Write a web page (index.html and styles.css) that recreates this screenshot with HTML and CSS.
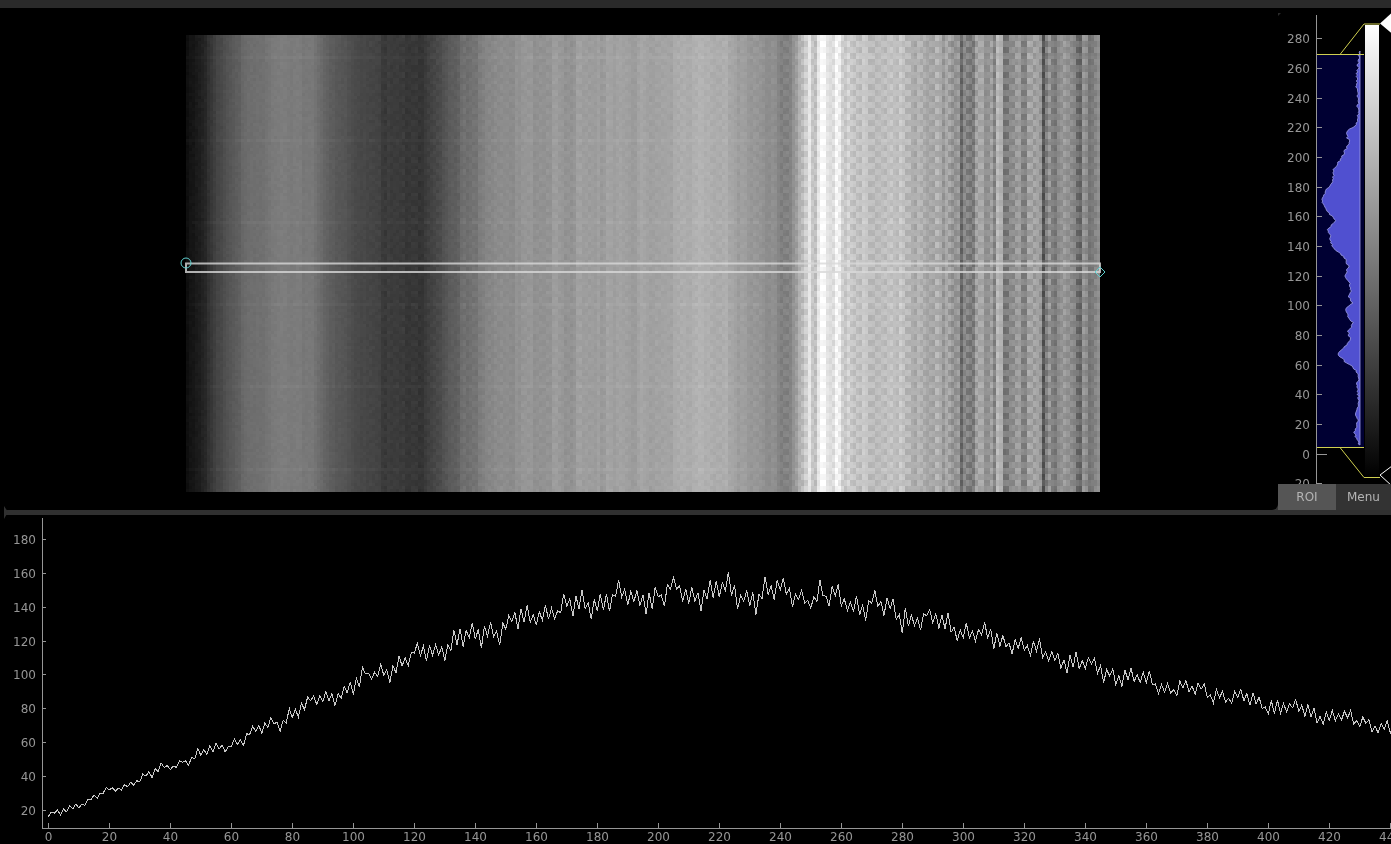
FILE: index.html
```html
<!DOCTYPE html>
<html>
<head>
    <meta charset="utf-8">
    <meta content="width=device-width, initial-scale=1" name="viewport">
    <title>ImageView</title>
    <link rel="stylesheet" href="styles.css">
</head>
<body>
<div class="topbar"></div>
<div class="upper">
    <div class="image-view">
        <canvas id="image" class="image" width="300" height="150"></canvas>
        <svg class="roi" viewBox="0 8 1278 502">
            <rect class="roi-box" x="186" y="263.5" width="914" height="8.5"></rect>
            <circle class="roi-handle" cx="186" cy="263" r="5"></circle>
            <polygon class="roi-handle" points="1100,267 1105,272 1100,277 1095,272"></polygon>
        </svg>
    </div>
    <div class="side">
        <div class="hist-view">
            <span class="handle"></span>
            <svg id="hist" class="hist" viewBox="1278 8 113 476">
                <rect class="hist-bg" x="1317" y="55" width="47" height="392"></rect>
                <polygon id="histFill" class="hist-fill"></polygon>
                <line class="axis" x1="1316.5" y1="15" x2="1316.5" y2="484"></line>
                <line class="region" x1="1317" y1="54.5" x2="1364" y2="54.5"></line>
                <line class="region" x1="1317" y1="447.5" x2="1364" y2="447.5"></line>
                <polyline class="region" points="1340,54.5 1364,24 1380,24"></polyline>
                <polyline class="region" points="1340,447.5 1364,477.5 1380,477.5"></polyline>
                <defs>
                    <linearGradient id="levels" x1="0" y1="0" x2="0" y2="1">
                        <stop offset="0" stop-color="#ffffff"></stop>
                        <stop offset="1" stop-color="#000000"></stop>
                    </linearGradient>
                </defs>
                <rect x="1365" y="25" width="14" height="452" fill="url(#levels)"></rect>
                <polygon class="tri-top" points="1380,23.5 1392,12.5 1392,33.5"></polygon>
                <polygon class="tri-bottom" points="1380,475 1392,466 1392,486"></polygon>
            </svg>
        </div>
        <div class="buttons">
            <div class="btn btn-on">ROI</div>
            <div class="btn">Menu</div>
        </div>
    </div>
</div>
<div class="splitter"></div>
<div class="plot-view">
    <svg id="plot" class="plot" viewBox="0 515 1391 329">
        <line class="axis" x1="42.5" y1="518" x2="42.5" y2="828"></line>
        <line class="axis" x1="42" y1="828.5" x2="1391" y2="828.5"></line>
        <polyline id="curve" class="curve"></polyline>
    </svg>
</div>
<script src="script.js" type="text/javascript"></script>
</body>
</html>
```

FILE: styles.css
```css
html, body {
    margin: 0;
    height: 100%;
    background-color: #000;
    overflow: hidden;
}

body {
    display: flex;
    flex-direction: column;
    font-family: "DejaVu Sans", sans-serif;
}

.topbar {
    height: 8px;
    background-color: #2a2a2a;
}

.upper {
    display: flex;
    height: 502px;
    background-color: #333;
}

.image-view {
    flex: 1;
    position: relative;
    box-sizing: border-box;
    padding: 27px 0 0 186px;
    background-color: #000;
    border-bottom-right-radius: 6px;
}

.image {
    display: block;
    width: 914px;
    height: 457px;
    image-rendering: pixelated;
}

.roi {
    position: absolute;
    left: 0;
    top: 0;
    width: 1278px;
    height: 502px;
    overflow: visible;
}

.roi-box {
    fill: none;
    stroke: #d8d8d8;
    stroke-opacity: 0.8;
    stroke-width: 2;
}

.roi-handle {
    fill: none;
    stroke: #5fd0d0;
    stroke-width: 1;
}

.side {
    width: 113px;
    display: flex;
    flex-direction: column;
}

.hist-view {
    flex: 1;
    position: relative;
    background-color: #000;
    overflow: hidden;
}

.handle {
    position: absolute;
    left: -3px;
    top: 5px;
    border-left: 3px solid transparent;
    border-right: 3px solid transparent;
    border-top: 3px solid #2a2a2a;
}

.hist {
    display: block;
    width: 113px;
    height: 476px;
    will-change: transform;
}

.hist-bg {
    fill: #000033;
}

.hist-fill {
    fill: #5050d0;
    stroke: #a0a0e6;
    stroke-width: 0.8;
}

.axis {
    stroke: #969696;
    stroke-width: 1;
    shape-rendering: crispEdges;
}

.tick-label {
    fill: #969696;
    font-family: "DejaVu Sans", sans-serif;
    font-size: 12px;
}

.region {
    fill: none;
    stroke: #d0d050;
    stroke-width: 1;
}

.tri-top {
    fill: #fff;
}

.tri-bottom {
    fill: #000;
    stroke: #fff;
    stroke-width: 1;
}

.buttons {
    display: flex;
    height: 26px;
    background-color: #333;
}

.btn {
    width: 55px;
    line-height: 26px;
    text-align: center;
    font-size: 12px;
    color: #b4b4b4;
    will-change: transform;
}

.btn-on {
    width: 58px;
    background-color: #555;
}

.splitter {
    position: relative;
    height: 5px;
    margin-left: 4px;
    background-color: #303030;
}

.splitter::before {
    content: "";
    position: absolute;
    left: 0;
    top: -4px;
    border-left: 4px solid #303030;
    border-top: 6px solid transparent;
    border-bottom: 7px solid transparent;
}

.plot-view {
    flex: 1;
    min-height: 0;
}

.plot {
    display: block;
    width: 1391px;
    height: 329px;
    will-change: transform;
}

.curve {
    fill: none;
    stroke: #c8c8c8;
    stroke-width: 1;
    shape-rendering: crispEdges;
}
```

FILE: script.js
```js
var SVG_NS = 'http://www.w3.org/2000/svg';

// small repeatable random numbers, so every run draws the same picture
var seed = 12345;
function rnd() {
    seed = (seed * 1103515245 + 12345) % 2147483648;
    return seed / 2147483648;
}

function interp(table, x) {
    if (x <= table[0][0]) return table[0][1];
    for (var i = 1; i < table.length; i++) {
        if (x <= table[i][0]) {
            var a = table[i - 1], b = table[i];
            return a[1] + (b[1] - a[1]) * (x - a[0]) / (b[0] - a[0]);
        }
    }
    return table[table.length - 1][1];
}

function addNode(svg, name, attrs, text) {
    var node = document.createElementNS(SVG_NS, name);
    for (var key in attrs) node.setAttribute(key, attrs[key]);
    if (text !== undefined) node.textContent = text;
    svg.appendChild(node);
}

// image: column brightness by screen x
var profile = [
    [186, 14], [200, 30], [213, 65], [247, 108], [280, 124], [313, 118], [330, 92],
    [363, 70], [397, 55], [420, 55], [447, 85], [480, 128], [520, 146], [560, 152],
    [600, 156], [650, 162], [700, 176], [730, 168], [760, 146], [790, 128], [800, 185],
    [808, 232], [815, 222], [822, 250], [830, 224], [838, 234], [848, 204], [855, 190],
    [870, 194], [900, 188], [920, 172], [930, 160], [960, 140], [1000, 142], [1050, 142],
    [1100, 124]
];
// columns that stand out on the right
var stripes = [
    [812, -30], [820, 12], [836, 20], [843, -20], [942, -22], [960, -28], [972, -26],
    [980, 18], [993, -30], [998, 20], [1040, 30], [1043, -32], [1048, 20], [1065, 14],
    [1077, -16], [1092, 16]
];

var canvas = document.getElementById('image');
var ctx = canvas.getContext('2d');
var picture = ctx.createImageData(300, 150);
var columns = [];
var checks = [];
var pair = 0;
for (var c = 0; c < 300; c++) {
    var sx = 186 + c * 3.047;
    // stripes are mostly two columns wide
    if (c % 2 == 0) pair = rnd() - 0.5;
    var stripeAmp = c < 90 ? 7 : (c < 200 ? 11 : (c < 245 ? 18 : 38));
    var v = interp(profile, sx) + pair * stripeAmp + (rnd() - 0.5) * stripeAmp * 0.4;
    for (var s = 0; s < stripes.length; s++) {
        if (Math.abs(stripes[s][0] - sx) < 2) v += stripes[s][1];
    }
    columns.push(v);
    var checkAmp = c < 60 ? 0.5 : (c < 195 ? 2.5 : (c < 245 ? 7 : 11));
    checks.push(checkAmp * (0.3 + rnd()));
}
for (var r = 0; r < 150; r++) {
    // a few rows are a little brighter
    var rowShift = (r % 27 == 7) ? 4 : 0;
    for (var c2 = 0; c2 < 300; c2++) {
        var sign = (((c2 >> 1) + (r >> 1)) & 1) ? 1 : -1;
        var g = columns[c2] + sign * checks[c2] + rowShift + (rnd() - 0.5) * 5;
        g = Math.max(0, Math.min(255, g));
        var p = (r * 300 + c2) * 4;
        picture.data[p] = picture.data[p + 1] = picture.data[p + 2] = g;
        picture.data[p + 3] = 255;
    }
}
ctx.putImageData(picture, 0, 0);

// histogram outline, traced as [y, x]
var outline = [
    [51, 1359], [60, 1359], [75, 1357], [85, 1356], [100, 1358], [120, 1358], [125, 1356],
    [130, 1348], [137, 1347], [143, 1350], [150, 1345], [158, 1342], [167, 1335], [172, 1333],
    [180, 1333], [185, 1331], [190, 1326], [198, 1322], [205, 1324], [212, 1328], [218, 1333],
    [221, 1336], [225, 1331], [230, 1328], [237, 1330], [245, 1332], [250, 1335], [255, 1342],
    [262, 1347], [267, 1348], [275, 1345], [280, 1348], [288, 1351], [297, 1349], [303, 1352],
    [310, 1345], [317, 1349], [323, 1353], [332, 1348], [340, 1351], [348, 1343], [355, 1337],
    [358, 1343], [362, 1345], [367, 1353], [375, 1359], [387, 1357], [400, 1359], [413, 1356],
    [422, 1358], [432, 1354], [445, 1359]
];
var pts = ['1360,51'];
for (var y = 51; y <= 445; y += 1.5) {
    var hx = interp(outline, y) + (rnd() - 0.5) * 2.4;
    pts.push(Math.min(hx, 1360).toFixed(1) + ',' + y);
}
pts.push('1360,445');
document.getElementById('histFill').setAttribute('points', pts.join(' '));

// histogram axis
var hist = document.getElementById('hist');
for (var t = -20; t <= 280; t += 20) {
    var ty = 454 - t * 1.4825;
    var tickEnd = t == 0 ? 1327 : 1322;
    addNode(hist, 'line', {'class': 'axis', x1: 1317, x2: tickEnd, y1: ty, y2: ty});
    addNode(hist, 'text', {'class': 'tick-label', x: 1310, y: ty + 4.5, 'text-anchor': 'end'}, String(t));
}

// plot axes
var plot = document.getElementById('plot');
function plotX(v) { return 48.3 + v * 3.05; }
function plotY(v) { return 810 - (v - 20) * 1.695; }

for (var a = 20; a <= 180; a += 20) {
    var ay = Math.round(plotY(a)) + 0.5;
    addNode(plot, 'line', {'class': 'axis', x1: 43, x2: 46, y1: ay, y2: ay});
    addNode(plot, 'text', {'class': 'tick-label', x: 36, y: ay + 4, 'text-anchor': 'end'}, String(a));
}
for (var b = 0; b <= 440; b += 20) {
    var bx = Math.round(plotX(b)) + 0.5;
    addNode(plot, 'line', {'class': 'axis', x1: bx, x2: bx, y1: 823, y2: 828});
    addNode(plot, 'text', {'class': 'tick-label', x: bx, y: 841, 'text-anchor': 'middle'}, String(b));
}

// plot curve
var shape = [
    [0, 16], [20, 31], [40, 46], [60, 59], [80, 77], [100, 94], [120, 111], [140, 123],
    [160, 135], [180, 144], [200, 147], [220, 148], [240, 148], [260, 144], [280, 136],
    [300, 126], [320, 117], [340, 105], [360, 96], [380, 90], [400, 82], [420, 76], [440, 68],
    [450, 64]
];
var line = [];
for (var i = 0; i <= 450; i++) {
    var base = interp(shape, i);
    var amp = 1.2 + 6.5 * Math.pow(base / 148, 1.2);
    var zig = (i % 2 ? 1 : -1) * (0.3 + 0.5 * rnd());
    zig += 0.45 * Math.sin(i * 0.37 + 1) + 0.4 * Math.sin(i * 1.05) + (rnd() - 0.5) * 0.6;
    line.push(plotX(i).toFixed(1) + ',' + plotY(base + amp * zig).toFixed(1));
}
document.getElementById('curve').setAttribute('points', line.join(' '));
```
